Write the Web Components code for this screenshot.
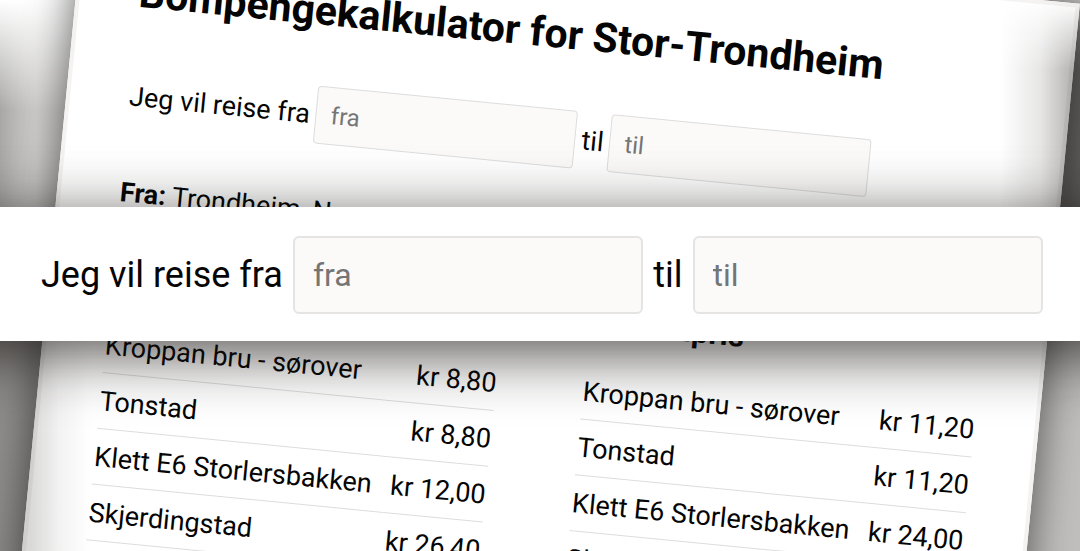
<!DOCTYPE html>
<html lang="nb"><head><meta charset="utf-8"><title>Bompengekalkulator</title>
<style>
body{margin:0;font-family:Roboto,"Liberation Sans",sans-serif;color:#050505;background:#fff}
</style></head><body>
<toll-stage>
<toll-sheet slot="sheet">
<trip-form></trip-form>
<fare-list slot="left" heading="Rabattpris" prices="kr 8,80|kr 8,80|kr 12,00|kr 26,40"></fare-list>
<fare-list slot="right" heading="Normalpris" prices="kr 11,20|kr 11,20|kr 24,00|kr 52,80"></fare-list>
</toll-sheet>
<trip-form class="big"></trip-form>
</toll-stage>
<script>
const define=(name,html)=>customElements.define(name,class extends HTMLElement{
connectedCallback(){if(this.shadowRoot)return;this.attachShadow({mode:"open"}).innerHTML=html(this);}
});
define("toll-stage",()=>`<style>
:host{display:grid;grid-template-columns:100%;grid-template-rows:207px auto 1fr;height:100vh;overflow:hidden;position:relative}
.backdrop{position:absolute;inset:0;overflow:hidden;
background:
linear-gradient(to bottom,#fff,rgba(255,255,255,0) 110px) 0 0/90px 110px no-repeat,
linear-gradient(to right,#a8a7a6,#d2d1cf 36px) 0 0/90px 207px no-repeat,
linear-gradient(to bottom,#c8c7c6,#888 30px) 100% 0/90px 207px no-repeat,
linear-gradient(to right,#a9a7a6,#aaa 60px,#c0bfbe calc(100% - 20px))}
.shade{position:absolute;inset:0;background:
linear-gradient(to left,rgba(20,15,10,.3) 10px,rgba(20,15,10,.1) 40px,transparent 80px) 100% 0/80px 207px no-repeat,
linear-gradient(to right,rgba(20,15,10,.16) 30px,rgba(20,15,10,.05) 60px,transparent 90px) 0 100%/90px 210px no-repeat;
-webkit-mask:linear-gradient(transparent,#000 70px)}
.glow{grid-row:2;grid-column:1;position:relative;margin:0 -80px;box-shadow:0 12px 62px rgba(20,16,14,.74)}
.banner{grid-row:2;grid-column:1;position:relative;background:#fff;padding:29px 37px 27px 41px}
</style><div class="backdrop"><slot name="sheet"></slot><div class="shade"></div></div><div class="glow"></div><section class="banner"><slot></slot></section>`);
define("toll-sheet",()=>`<style>
:host{display:block;box-sizing:border-box;margin:-46px 29px 0 51px;padding:51px 60px 60px 59px;background:#fff;border:4px solid #f5f3f2;transform:rotate(5.55deg);transform-origin:50% 322px;box-shadow:0 0 44px rgba(0,0,0,.6)}
h1{font-size:41px;line-height:50px;margin:0 0 50px;white-space:nowrap}
p{font-size:27px;line-height:32px;margin:51px 0 50px}
.cols{display:grid;grid-template-columns:1fr 1fr;gap:87px}
</style><h1>Bompengekalkulator for Stor-Trondheim</h1><slot></slot><p><b>Fra:</b> Trondheim, Norge</p><div class="cols"><slot name="left"></slot><slot name="right"></slot></div>`);
define("fare-list",e=>{const p=e.getAttribute("prices").split("|");return `<style>
:host{display:block;font-size:27px}
h2{font-size:31px;line-height:36px;margin:0 0 24px}
table{width:100%;border-collapse:collapse}
th,td{font-weight:400;padding:0;height:55px;border-bottom:1px solid #ddd;text-align:left;white-space:nowrap}
td{text-align:right}
</style><h2>${e.getAttribute("heading")}</h2><table>${["Kroppan bru - sørover","Tonstad","Klett E6 Storlersbakken","Skjerdingstad"].map((n,i)=>`<tr><th scope="row">${n}</th><td>${p[i]}</td></tr>`).join("")}</table>`});
define("trip-form",()=>`<style>
:host{display:block;font-size:27px}
:host(.big){font-size:36px}
form{display:flex;align-items:center;gap:6px}
:host(.big) form{gap:10px}
input{font-family:Roboto,sans-serif;font-size:24px;box-sizing:border-box;width:261px;height:58px;padding:0 14px;border:1px solid #ddd;border-radius:4px;background:#fbfaf9}
input::placeholder{color:#757575}
:host(.big) input{font-size:32px;flex:1;min-width:0;height:78px;padding:0 18px;border:2px solid #e5e4e3;border-radius:6px}
</style><form><label for="a">Jeg vil reise fra</label><input id="a" placeholder="fra"><label for="b">til</label><input id="b" placeholder="til"></form>`);
</script></body></html>
